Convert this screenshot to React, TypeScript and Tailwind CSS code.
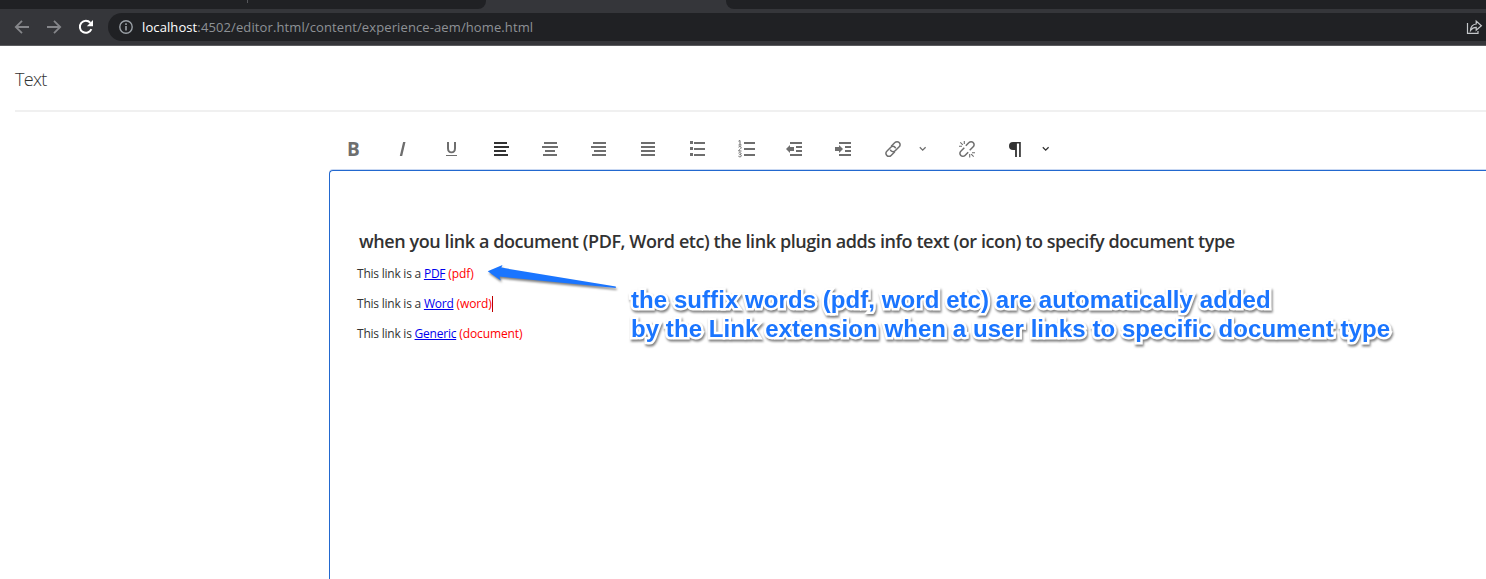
import { ReactNode } from "react";

type Bar = [number, number, number];

const Icon = ({ children, color = "#6e6e6e" }: { children: ReactNode; color?: string }) => (
  <svg width="20" height="20" viewBox="0 0 20 20" fill={color} className="block shrink-0 overflow-visible">
    {children}
  </svg>
);

const Bars = ({ bars, color }: { bars: Bar[]; color?: string }) => (
  <Icon color={color}>
    {bars.map(([x, y, w]) => (
      <rect key={y} x={x} y={y} width={w} height="2" />
    ))}
  </Icon>
);

const Tool = ({ children }: { children: ReactNode }) => (
  <button className="flex h-5 w-[49px] shrink-0 items-center pl-3.5">{children}</button>
);

const Chevron = ({ color }: { color: string }) => (
  <svg width="8" height="6" viewBox="0 0 8 6" fill="none" stroke={color} strokeWidth="1.3" className="block shrink-0">
    <path d="M.8 1.2 3.700 4.100 6.600 1.200" />
  </svg>
);

const indentBars = (
  <>
    <rect x="6" y="3" width="12" height="2" />
    <rect x="12" y="7" width="6" height="2" />
    <rect x="12" y="11" width="6" height="2" />
    <rect x="6" y="15" width="12" height="2" />
  </>
);

function BrowserBar() {
  return (
    <header className="flex h-[46px] flex-col overflow-hidden border-b border-[#5b5c5f] bg-[#35363a]">
      <div className="flex h-[9px] shrink-0">
        <div className="flex w-[486px] justify-center rounded-br-lg bg-[#202124]">
          <div className="ml-2 h-[3px] w-px bg-[#55565a]" />
        </div>
        <div className="w-[240px]" />
        <div className="flex-1 rounded-bl-lg bg-[#202124]" />
      </div>
      <div className="flex h-9 shrink-0 items-center pl-[14px]">
        <svg width="16" height="16" viewBox="0 0 16 16" fill="none" stroke="#85868a" strokeWidth="1.8">
          <path d="M15 8H2M8 1.8 1.8 8 8 14.2" />
        </svg>
        <svg width="16" height="16" viewBox="0 0 16 16" fill="none" stroke="#85868a" strokeWidth="1.8" className="ml-4">
          <path d="M1 8h13M8 1.8 14.2 8 8 14.2" />
        </svg>
        <svg width="16" height="16" viewBox="0 0 16 16" fill="none" className="ml-4">
          <path d="M13.4 10.2A6 6 0 1 1 12.4 3.9" stroke="#fff" strokeWidth="2" />
          <path d="M15 1v6.2H8.8z" fill="#fff" />
        </svg>
        <div className="ml-[14px] flex h-7 flex-1 items-center rounded-l-full bg-[#202124] pl-[11px]">
          <svg width="14" height="14" viewBox="0 0 14 14" fill="none" stroke="#9aa0a6" strokeWidth="1.4">
            <circle cx="7" cy="7" r="6.2" />
            <path d="M7 6v4.5M7 3.3v1.6" strokeWidth="1.6" />
          </svg>
          <div className="ml-[9px] flex font-['Open_Sans','Noto_Sans',sans-serif] text-[13px] leading-7 whitespace-nowrap text-[#8e9196]">
            <span className="tracking-[0.1px] text-white">localhost</span>
            <span className="tracking-[0.11px]">:4502/editor.html/content/experience-aem/home.html</span>
          </div>
          <svg width="18" height="16" viewBox="0 0 18 16" fill="none" stroke="#c4c7ca" strokeWidth="1.2" className="mr-0.5 ml-auto">
            <path d="M1.5 4v10.400H12V12" />
            <path d="M4.500 11.500C4.800 7 7 5.300 10.200 5V2l5.200 4.700-5.200 4.500V8.400C7.500 8.400 6 9.200 4.500 11.500z" />
          </svg>
        </div>
      </div>
    </header>
  );
}

function Toolbar() {
  return (
    <div className="flex h-5 items-center pl-[329px]">
      <button className="flex h-5 w-[49px] shrink-0 items-center pl-[18px] font-['Open_Sans',sans-serif] text-[19px] leading-5 font-bold text-[#6e6e6e]">
        B
      </button>
      <Tool>
        <Icon>
          <path d="M11.100 3h2.400L10.200 17H7.800z" />
        </Icon>
      </Tool>
      <Tool>
        <Icon>
          <path d="M6 3h2v6.200c0 2.400.8 3.300 2.500 3.300S13 11.600 13 9.200V3h2v6.300c0 3.500-1.700 5-4.500 5S6 12.800 6 9.300z" />
          <rect x="5" y="16" width="11" height="1" />
        </Icon>
      </Tool>
      <Tool><Bars color="#323232" bars={[[4, 3, 13], [4, 7, 15], [4, 11, 12], [4, 15, 14]]} /></Tool>
      <Tool><Bars bars={[[5, 3, 13], [3, 7, 16], [6, 11, 10], [4, 15, 14]]} /></Tool>
      <Tool><Bars bars={[[5, 3, 13], [3, 7, 15], [6, 11, 12], [4, 15, 14]]} /></Tool>
      <Tool><Bars bars={[[4, 3, 14], [4, 7, 14], [4, 11, 14], [4, 15, 14]]} /></Tool>
      <Tool>
        <Icon>
          {[2, 8, 14].map((y) => (
            <g key={y}>
              <rect x="4" y={y} width="3" height="3" />
              <rect x="8" y={y + 1} width="11" height="2" />
            </g>
          ))}
        </Icon>
      </Tool>
      <Tool>
        <Icon>
          {[3, 9, 15].map((y) => (
            <rect key={y} x="9" y={y} width="11" height="2" />
          ))}
          <path
            d="M3.500 2.200 5 1.500V6M3.500 6h3M3.500 8.200c.5-1 2.700-1 2.700.3C6.200 9.800 4 10.500 3.600 12h2.900M3.500 14.200c.8-.9 2.700-.6 2.600.4 0 .8-.8 1-1.500 1 .9 0 1.800.3 1.800 1.200 0 1.200-2.200 1.400-3 .4"
            fill="none"
            stroke="#6e6e6e"
            strokeWidth="1"
          />
        </Icon>
      </Tool>
      <Tool>
        <Icon>
          {indentBars}
          <path d="M2 10l4-4v2h4v4H6v2z" />
        </Icon>
      </Tool>
      <Tool>
        <Icon>
          {indentBars}
          <path d="M10 10 6 6v2H2v4h4v2z" />
        </Icon>
      </Tool>
      <Tool>
        <svg width="20" height="20" viewBox="0 0 20 20" fill="none" stroke="#6e6e6e" strokeWidth="1.500">
          <path d="M9.200 7.200 12.900 3.600a2.900 2.900 0 0 1 4.300 0 2.900 2.900 0 0 1 0 4.200l-4 4a2.900 2.900 0 0 1-4.200 0l-.7-1" />
          <path d="M12.800 12.800 9.100 16.400a2.900 2.900 0 0 1-4.300 0 2.900 2.900 0 0 1 0-4.200l4-4a2.900 2.900 0 0 1 4.200 0l.7 1" />
        </svg>
      </Tool>
      <div className="flex w-[39px] pl-[2px]"><Chevron color="#6e6e6e" /></div>
      <div className="flex w-[49px]">
        <svg width="20" height="20" viewBox="0 0 20 20" fill="none" stroke="#6e6e6e" strokeWidth="1.500">
          <path d="M9.800 6.800 13 3.600a2.900 2.900 0 0 1 4.200 0 2.900 2.900 0 0 1 0 4.200l-3.500 3.500" />
          <path d="M12.200 13.200 9 16.400a2.900 2.900 0 0 1-4.200 0 2.900 2.900 0 0 1 0-4.200l3.500-3.500" />
          <path d="M3 7.300h3M4.300 3.300l2.500 2.500M8.300 2v3M19 13.700h-3M17.700 17.700l-2.500-2.500M13.700 18.500V15" strokeWidth="1.100" />
        </svg>
      </div>
      <div className="flex w-[37px]">
        <Icon color="#323232">
          <path d="M15.800 3v15h-1.700V4.600h-2.200V18h-1.800v-7H8a4 4 0 0 1 0-8z" />
        </Icon>
      </div>
      <Chevron color="#323232" />
    </div>
  );
}

const DocLine = ({ lead, link, suffix, caret }: { lead: string; link: string; suffix: string; caret?: boolean }) => (
  <p className="flex h-[30px] items-center font-['Open_Sans',sans-serif] text-[12px] tracking-[-0.23px] whitespace-pre text-[#323232]">
    <span>{lead} </span>
    <a className="text-[#0000ee] underline">{link}</a>
    <span className="tracking-[-0.1px] text-[#ff0000]"> {suffix}</span>
    {caret && <span className="h-4 w-px bg-[#c00000]" />}
  </p>
);

export default function App() {
  return (
    <div className="relative h-[579px] w-[1486px] overflow-hidden bg-white">
      <BrowserBar />
      <div className="ml-[15px] flex h-[66px] items-center border-b-2 border-[#f0f0f0] pt-[3px] font-['Open_Sans',sans-serif] text-[18px] font-light tracking-[-0.7px] text-[#323232]">
        Text
      </div>
      <div className="pt-[27px]">
        <Toolbar />
      </div>
      <div className="mt-[11px] ml-[329px] h-[420px] rounded-tl-[4px] border-t border-l border-[#2268cf] pt-[55px] pl-[27px] shadow-[0_-1px_0_0_#c9d8f2]">
        <h1 className="ml-[2px] h-[33px] font-['Open_Sans',sans-serif] text-[18px] leading-[30px] font-semibold tracking-[-0.42px] whitespace-nowrap text-[#323232]">
          when you link a document (PDF, Word etc) the link plugin adds info text (or icon) to specify document type
        </h1>
        <DocLine lead="This link is a" link="PDF" suffix="(pdf)" />
        <DocLine lead="This link is a" link="Word" suffix="(word)" caret />
        <DocLine lead="This link is" link="Generic" suffix="(document)" />
      </div>
      <svg className="absolute top-[260px] left-[480px] drop-shadow-[1px_2px_1px_rgba(0,0,0,0.500)]" width="145" height="36" viewBox="480 260 145 36">
        <path d="M487.700 271.300 502.500 265 501.300 267.600 615.800 286.500V288L499.500 276.600 500.800 280.500z" fill="#1a75ff" />
      </svg>
      <div className="absolute top-[285px] left-[631px] font-['Liberation_Sans',Arial,sans-serif] text-[24px] leading-[29px] font-bold tracking-[0.065px] whitespace-nowrap text-[#1a75ff] drop-shadow-[1px_2px_1px_rgba(0,0,0,0.5)] [-webkit-text-stroke:5px_white] [paint-order:stroke_fill]">
        <div>the suffix words (pdf, word etc) are automatically added</div>
        <div>by the Link extension when a user links to specific document type</div>
      </div>
    </div>
  );
}
